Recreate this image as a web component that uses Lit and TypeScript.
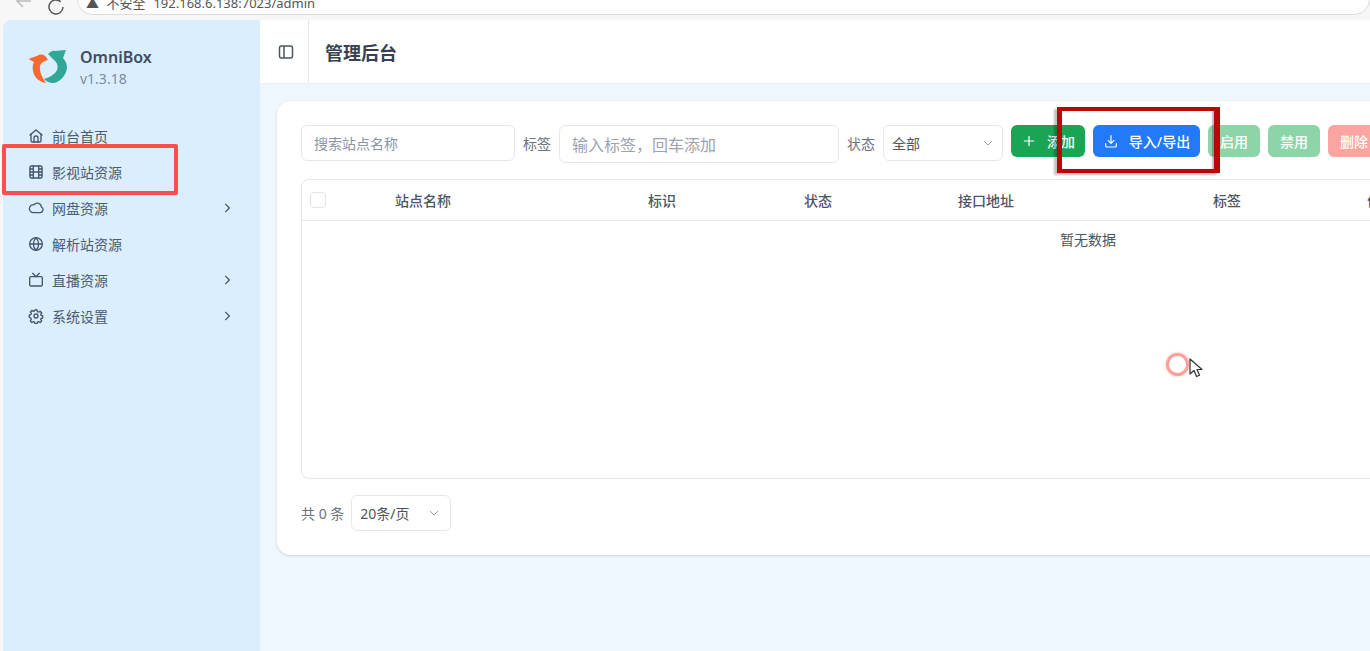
import { LitElement, css, html, svg } from "lit";
import { customElement } from "lit/decorators.js";

const menu = [
  { label: "前台首页", icon: "home" },
  { label: "影视站资源", icon: "film" },
  { label: "网盘资源", icon: "cloud", more: true },
  { label: "解析站资源", icon: "globe" },
  { label: "直播资源", icon: "tv", more: true },
  { label: "系统设置", icon: "gear", more: true },
];

const columns = ["站点名称", "标识", "状态", "接口地址", "标签", "优先级"];

const icons: Record<string, unknown> = {
  home: svg`<path d="M3 10.500 12 3l9 7.500"/><path d="M4.500 9v10a2 2 0 0 0 2 2h11a2 2 0 0 0 2-2V9"/><path d="M9 21v-6a3 3 0 0 1 6 0v6"/>`,
  film: svg`<rect x="3" y="3" width="18" height="18" rx="2"/><path d="M8 3v18M16 3v18M3 12h18M3 7.500h5M3 16.500h5M16 7.500h5M16 16.500h5"/>`,
  cloud: svg`<path d="M17.500 19H8a6 6 0 1 1 1.200-11.900A6 6 0 0 1 20 10.500 4.500 4.500 0 0 1 17.500 19Z"/>`,
  globe: svg`<circle cx="12" cy="12" r="9.500"/><path d="M2.500 12h19M12 2.500c3 3 4 6 4 9.500s-1 6.500-4 9.500c-3-3-4-6-4-9.500s1-6.500 4-9.500Z"/>`,
  tv: svg`<rect x="2.500" y="7" width="19" height="14" rx="2"/><path d="m17 2-5 5-5-5"/>`,
  gear: svg`<circle cx="12" cy="12" r="3"/><path d="M10.300 3h3.400l.5 2.600 1.700.7 2.200-1.500 2.400 2.400-1.500 2.200.7 1.700 2.300.5v3.400l-2.300.5-.7 1.700 1.500 2.200-2.400 2.400-2.200-1.500-1.700.7-.5 2.600h-3.400l-.5-2.600-1.700-.7-2.200 1.500-2.400-2.400 1.500-2.200-.7-1.700L2 13.700v-3.400l2.300-.5.7-1.700-1.500-2.200 2.400-2.400 2.200 1.500 1.700-.7Z"/>`,
};

@customElement("app-root")
export class AppRoot extends LitElement {
  static styles = css`
    :host {
      display: block;
      position: relative;
      width: 1370px;
      height: 651px;
      overflow: hidden;
      background: #f7f7f7;
      font-family: "Noto Sans", "Noto Sans CJK SC", sans-serif;
      color: #4b5563;
    }
    .chrome {
      height: 20px;
      display: flex;
      align-items: flex-start;
      gap: 13px;
      padding-left: 14px;
      box-sizing: border-box;
      overflow: hidden;
    }
    .chrome svg {
      flex: none;
    }
    .back {
      margin-top: -9px;
    }
    .reload {
      margin-top: -2px;
    }
    .address {
      width: 1300px;
      height: 31px;
      margin-top: -16px;
      margin-left: -1px;
      border: 1px solid #dcdcdc;
      border-radius: 16px;
      background: #fff;
      box-sizing: border-box;
      padding: 9px 0 0 8px;
      font-size: 13px;
      line-height: 18px;
      color: #555;
      white-space: nowrap;
    }
    .address i {
      font-style: normal;
      margin-right: 4px;
    }
    .address b {
      font-weight: 400;
      margin-right: 8px;
    }
    .frame {
      display: flex;
      height: 631px;
      margin-left: 3px;
    }
    .side {
      flex: none;
      width: 257px;
      background: #dbeefe;
      border-top-left-radius: 8px;
    }
    .brand {
      display: flex;
      align-items: center;
      gap: 12px;
      height: 93px;
      padding: 2px 0 0 25px;
      box-sizing: border-box;
    }
    .brand .logo {
      margin-top: -1px;
    }
    .brand .name {
      font-size: 16px;
      line-height: 20px;
      font-weight: 600;
      color: #3f4d63;
    }
    .brand .ver {
      font-size: 14px;
      line-height: 20px;
      margin-top: 2px;
      color: #7d8b9e;
    }
    .menu {
      margin-top: 5px;
    }
    .item {
      display: flex;
      align-items: center;
      height: 36px;
      padding: 0 26px 0 25px;
      font-size: 14px;
      color: #4b5b70;
    }
    .item .ico {
      width: 16px;
      height: 16px;
      margin-right: 8px;
      fill: none;
      stroke: #45556c;
      stroke-width: 2;
      stroke-linecap: round;
      stroke-linejoin: round;
    }
    .item .arrow {
      margin-left: auto;
      width: 14px;
      height: 14px;
      fill: none;
      stroke: #45556c;
      stroke-width: 2.200;
    }
    .main {
      flex: 1;
      min-width: 0;
      background: #eef6fe;
    }
    .top {
      display: flex;
      align-items: center;
      height: 63px;
      background: #fff;
      border-bottom: 1px solid #e6edf4;
      box-sizing: content-box;
    }
    .toggle {
      flex: none;
      width: 49px;
      height: 100%;
      display: flex;
      align-items: center;
      justify-content: center;
      padding: 1px 0 0 3px;
      border-right: 1px solid #e5e7eb;
      box-sizing: border-box;
    }
    .toggle svg {
      width: 16px;
      height: 16px;
      fill: none;
      stroke: #4b5563;
      stroke-width: 1.500;
    }
    .title {
      margin-left: 16px;
      font-size: 18px;
      font-weight: 600;
      color: #374151;
    }
    .card {
      width: 1622px;
      height: 454px;
      margin: 17px 0 0 17px;
      padding: 24px;
      box-sizing: border-box;
      background: #fff;
      border-radius: 14px;
      box-shadow: 0 1px 3px rgba(0, 0, 0, 0.14);
    }
    .tools {
      display: flex;
      align-items: flex-start;
      gap: 8px;
      height: 36px;
    }
    .field {
      flex: none;
      height: 36px;
      display: flex;
      align-items: center;
      box-sizing: border-box;
      border: 1px solid #e5e7eb;
      border-radius: 6px;
      padding: 0 12px;
      font-size: 14px;
      color: #8a94a3;
      background: #fff;
      white-space: nowrap;
    }
    .search {
      width: 214px;
    }
    .tags {
      width: 280px;
      height: 38px;
      font-size: 16px;
      color: #9ca3af;
    }
    .status {
      width: 120px;
      padding: 0 8px;
      color: #4b5563;
      justify-content: space-between;
      font-size: 14px;
    }
    .lbl {
      font-size: 14px;
      line-height: 38px;
      color: #6b7280;
      white-space: nowrap;
    }
    .chev {
      width: 12px;
      height: 12px;
      fill: none;
      stroke: #9ca3af;
      stroke-width: 2;
      flex: none;
    }
    .btn {
      flex: none;
      height: 32px;
      display: flex;
      align-items: center;
      justify-content: center;
      border-radius: 6px;
      color: #fff;
      font-size: 14px;
      font-weight: 500;
      white-space: nowrap;
    }
    .btn svg {
      width: 16px;
      height: 16px;
      fill: none;
      stroke: #fff;
      stroke-width: 1.800;
      stroke-linecap: round;
      stroke-linejoin: round;
    }
    .add {
      width: 74px;
      gap: 10px;
      background: #1aa555;
    }
    .io {
      width: 107px;
      gap: 10px;
      background: #2479fb;
    }
    .on,
    .off {
      width: 52px;
      background: #8dd5a9;
    }
    .del {
      width: 52px;
      background: #fca5a0;
    }
    .table {
      height: 300px;
      margin-top: 18px;
      box-sizing: border-box;
      border: 1px solid #e5e7eb;
      border-radius: 8px;
    }
    .head {
      display: grid;
      grid-template-columns: 93px 253px 156px 154px 255px 154px 1fr;
      align-items: center;
      height: 41px;
      box-sizing: border-box;
      border-bottom: 1px solid #e5e7eb;
      font-size: 14px;
      font-weight: 500;
      color: #4b5563;
    }
    .check {
      width: 16px;
      height: 16px;
      margin-left: 8px;
      border: 1px solid #dfe3e8;
      border-radius: 4px;
      box-sizing: border-box;
    }
    .empty {
      text-align: center;
      margin-top: 9px;
      font-size: 14px;
      line-height: 20px;
      color: #4b5563;
    }
    .pager {
      display: flex;
      align-items: center;
      gap: 7px;
      margin-top: 16px;
      font-size: 14px;
      color: #6b7280;
    }
    .size {
      width: 100px;
      color: #4b5563;
      padding: 0 10px 0 8px;
      justify-content: space-between;
    }
    .note {
      position: absolute;
      box-sizing: border-box;
      pointer-events: none;
    }
    .note-menu {
      left: 2px;
      top: 144px;
      width: 176px;
      height: 51px;
      border: 4px solid #fb4f4f;
      border-radius: 2px;
    }
    .note-btn {
      left: 1057px;
      top: 107px;
      width: 163px;
      height: 66px;
      border: solid #b90808;
      border-width: 4px 6px 4px 5px;
      box-shadow: -3px 2px 2px rgba(0, 0, 0, 0.25), inset -2px 0 1px rgba(0, 0, 0, 0.25);
    }
    .ring {
      position: absolute;
      left: 1166px;
      top: 353px;
      width: 23px;
      height: 23px;
      box-sizing: border-box;
      border: 3px solid #fb9f9b;
      border-radius: 50%;
      box-shadow: 0 0 3px #fbb6b3;
      filter: blur(0.5px);
    }
    .cursor {
      position: absolute;
      left: 1189px;
      top: 358px;
      width: 14px;
      height: 21px;
    }
  `;

  private renderMenu() {
    return menu.map(
      (m) => html`
        <div class="item">
          <svg class="ico" viewBox="0 0 24 24">${icons[m.icon]}</svg>
          <span>${m.label}</span>
          ${m.more
            ? html`<svg class="arrow" viewBox="0 0 24 24"><path d="m9 5 7 7-7 7" /></svg>`
            : null}
        </div>
      `,
    );
  }

  private chevron() {
    return html`<svg class="chev" viewBox="0 0 24 24"><path d="m4 8 8 8 8-8" /></svg>`;
  }

  render() {
    return html`
      <div class="chrome">
        <svg class="back" width="20" height="20" viewBox="0 0 20 20" fill="none" stroke="#bbb" stroke-width="1.500">
          <path d="M17 10H3m6-6-6 6 6 6" />
        </svg>
        <svg class="reload" width="18" height="18" viewBox="0 0 18 18" fill="none" stroke="#555" stroke-width="1.500">
          <path d="M16 9a7 7 0 1 1-2.300-5.200" />
        </svg>
        <div class="address"><i>▲</i> <b>不安全</b>192.168.6.138:7023/admin</div>
      </div>
      <div class="frame">
        <aside class="side">
          <div class="brand">
            <svg class="logo" width="40" height="34" viewBox="0 0 40 34">
              <path
                fill="#f4692f"
                d="M1 9C4 7 7 7 9 6C13 3 18 5 20 10C15 11 11 14 12 19C12 24 15 28 18 33C11 32 6 27 5 21C4 17 5 14 6 12C4 11 2 10 1 9Z"
              />
              <path
                fill="#2fa89a"
                d="M20 4C22 2 25 0 27 1C30 1 34 0 38 0C37 3 36 5 35 8C38 11 39 15 39 18C38 26 31 33 25 33C21 33 18 31 16 29C20 28 24 26 27 23C31 19 30 14 27 11C25 9 23 7 20 4Z"
              />
            </svg>
            <div>
              <div class="name">OmniBox</div>
              <div class="ver">v1.3.18</div>
            </div>
          </div>
          <nav class="menu">${this.renderMenu()}</nav>
        </aside>
        <main class="main">
          <header class="top">
            <div class="toggle">
              <svg viewBox="0 0 16 16"><rect x="1.500" y="2" width="13" height="12" rx="2" /><path d="M6 2v12" /></svg>
            </div>
            <div class="title">管理后台</div>
          </header>
          <section class="card">
            <div class="tools">
              <div class="field search">搜索站点名称</div>
              <span class="lbl">标签</span>
              <div class="field tags">输入标签，回车添加</div>
              <span class="lbl">状态</span>
              <div class="field status">全部 ${this.chevron()}</div>
              <div class="btn add">
                <svg viewBox="0 0 24 24"><path d="M12 5v14M5 12h14" /></svg>添加
              </div>
              <div class="btn io">
                <svg viewBox="0 0 24 24"><path d="M12 4v11m-4.500-4 4.500 4.500 4.500-4.500M4 16v3a2 2 0 0 0 2 2h12a2 2 0 0 0 2-2v-3" /></svg>导入/导出
              </div>
              <div class="btn on">启用</div>
              <div class="btn off">禁用</div>
              <div class="btn del">删除</div>
            </div>
            <div class="table">
              <div class="head">
                <div><div class="check"></div></div>
                ${columns.map((c) => html`<div>${c}</div>`)}
              </div>
              <div class="empty">暂无数据</div>
            </div>
            <div class="pager">
              <span>共 0 条</span>
              <div class="field size">20条/页 ${this.chevron()}</div>
            </div>
          </section>
        </main>
      </div>
      <div class="note note-menu"></div>
      <div class="note note-btn"></div>
      <div class="ring"></div>
      <svg class="cursor" viewBox="0 0 14 21">
        <path d="M1 1v15l4-3.500 2.500 6 3-1.300-2.500-5.700h5Z" fill="#fff" stroke="#333" stroke-width="1.200" stroke-linejoin="round" />
      </svg>
    `;
  }
}
